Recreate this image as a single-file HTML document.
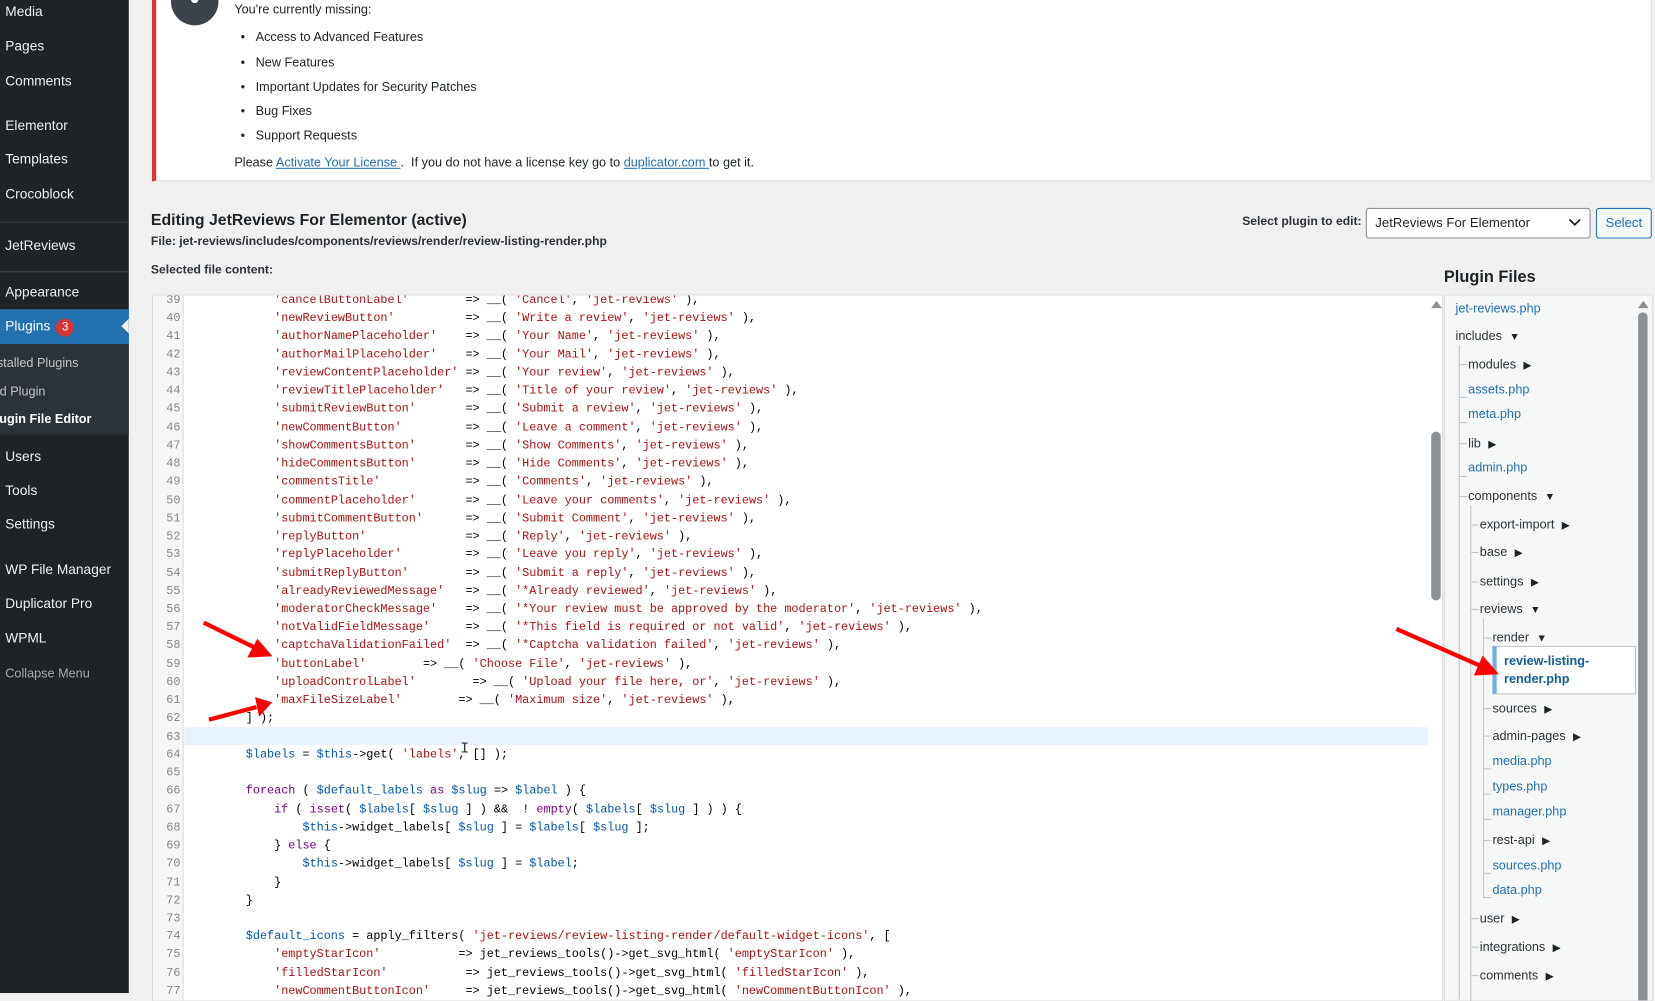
<!DOCTYPE html>
<html><head><meta charset="utf-8">
<style>
*{margin:0;padding:0;box-sizing:border-box}
html,body{width:1655px;height:993px;overflow:hidden;background:#f0f0f1}
#w{position:absolute;left:0;top:0;width:1568px;height:941px;transform:scale(1.05548,1.0553);transform-origin:0 0;font-family:"Liberation Sans",sans-serif;color:#1d2327;font-size:12px}
.a{position:absolute;white-space:nowrap}
#sb{position:absolute;left:0;top:0;width:122px;height:941px;background:#1d2327}
#sb .a{color:#f0f0f1;font-size:13px;line-height:18px;left:5px}
#notice{position:absolute;left:144px;top:-2px;width:1421px;height:174px;background:#fff;border:1px solid #dcdcde;border-left:4px solid #d63638}
#ed{position:absolute;left:144px;top:279px;width:1223px;height:670px;background:#fff;border:1px solid #dcdcde;overflow:hidden}
#gut{position:absolute;left:0;top:0;width:29px;height:100%;background:#f7f7f7;border-right:1px solid #ddd}
pre{position:absolute;left:0;top:-3px;font-family:"Liberation Mono",monospace;font-size:11.2px;line-height:17.24px;color:#000}
#nums{width:26px;text-align:right;color:#888}
#code{left:61px}
.s{color:#a11}.k{color:#708}.v{color:#05a}
.t{position:absolute;white-space:nowrap;font-size:12px;line-height:16px}
.l{color:#2271b1}
.f{color:#2c3338}
.tri{font-size:10px;margin-left:7px;color:#1d2327}
.vl{position:absolute;width:1px;background:#c3c4c7}
.hl{position:absolute;height:1px;width:7px;background:#c3c4c7}
</style></head><body><div id="w">

<div id="sb">
<div class="a" style="top:2px">Media</div>
<div class="a" style="top:35px">Pages</div>
<div class="a" style="top:68px">Comments</div>
<div class="a" style="top:110px">Elementor</div>
<div class="a" style="top:142px">Templates</div>
<div class="a" style="top:175px">Crocoblock</div>
<div style="position:absolute;left:0;top:210px;width:122px;height:1px;background:#3c434a"></div>
<div class="a" style="top:224px">JetReviews</div>
<div style="position:absolute;left:0;top:257px;width:122px;height:1px;background:#3c434a"></div>
<div class="a" style="top:268px">Appearance</div>
<div style="position:absolute;left:0;top:293px;width:122px;height:33px;background:#2271b1"></div>
<div style="position:absolute;left:115px;top:302px;width:0;height:0;border-top:7px solid transparent;border-bottom:7px solid transparent;border-right:7px solid #f0f0f1"></div>
<div class="a" style="top:300px;color:#fff">Plugins <span style="display:inline-block;background:#d63638;color:#fff;border-radius:9px;width:17px;height:17px;font-size:11px;line-height:17px;text-align:center;margin-left:2px">3</span></div>
<div style="position:absolute;left:0;top:326px;width:122px;height:86px;background:#2c3338"></div>
<div class="a" style="top:335px;left:-13px;font-size:12px;color:#c3c4c7">Installed Plugins</div>
<div class="a" style="top:362px;left:-15px;font-size:12px;color:#c3c4c7">Add Plugin</div>
<div class="a" style="top:388px;left:-12px;font-size:12px;color:#fff;font-weight:bold">Plugin File Editor</div>
<div class="a" style="top:424px">Users</div>
<div class="a" style="top:456px">Tools</div>
<div class="a" style="top:488px">Settings</div>
<div class="a" style="top:531px">WP File Manager</div>
<div class="a" style="top:563px">Duplicator Pro</div>
<div class="a" style="top:596px">WPML</div>
<div class="a" style="top:629px;color:#a7aaad;font-size:12px">Collapse Menu</div>
</div>

<div id="notice"></div>
<div style="position:absolute;left:162px;top:-21px;width:45px;height:45px;border-radius:50%;background:#3c434a"></div>
<div style="position:absolute;left:181px;top:-4px;width:7px;height:7px;border-radius:50%;background:#fff"></div>
<div class="a" style="left:222px;top:2px">You're currently missing:</div>
<div class="a" style="left:228px;top:28px">•&nbsp;&nbsp;&nbsp;Access to Advanced Features</div>
<div class="a" style="left:228px;top:52px">•&nbsp;&nbsp;&nbsp;New Features</div>
<div class="a" style="left:228px;top:75px">•&nbsp;&nbsp;&nbsp;Important Updates for Security Patches</div>
<div class="a" style="left:228px;top:98px">•&nbsp;&nbsp;&nbsp;Bug Fixes</div>
<div class="a" style="left:228px;top:121px">•&nbsp;&nbsp;&nbsp;Support Requests</div>
<div class="a" style="left:222px;top:147px">Please <span class="l" style="text-decoration:underline">Activate Your License </span>.&nbsp; If you do not have a license key go to <span class="l" style="text-decoration:underline">duplicator.com </span>to get it.</div>

<div class="a" style="left:143px;top:200px;font-size:15px;font-weight:bold;color:#1d2327">Editing JetReviews For Elementor (active)</div>
<div class="a" style="left:143px;top:223px;font-size:11.5px;font-weight:bold;color:#2c3338">File: jet-reviews/includes/components/reviews/render/review-listing-render.php</div>
<div class="a" style="left:143px;top:250px;font-size:11.5px;font-weight:bold;color:#2c3338">Selected file content:</div>

<div class="a" style="right:278px;top:204px;font-size:11.5px;font-weight:bold;color:#2c3338">Select plugin to edit:</div>
<div style="position:absolute;left:1294px;top:197px;width:213px;height:29px;background:#fff;border:1px solid #8c8f94;border-radius:3px"></div>
<div class="a" style="left:1303px;top:204px;font-size:12.5px">JetReviews For Elementor</div>
<svg class="a" style="left:1486px;top:206px" width="12" height="10"><path d="M1 2 L6 7 L11 2" stroke="#1d2327" stroke-width="1.6" fill="none"/></svg>
<div style="position:absolute;left:1512px;top:197px;width:53px;height:29px;background:#f6f7f7;border:1px solid #2271b1;border-radius:3px;color:#2271b1;text-align:center;line-height:27px;font-size:12.5px">Select</div>

<div id="ed">
<div id="gut"></div>
<div style="position:absolute;left:30px;top:409px;width:1178px;height:17px;background:#e8f2fe"></div>
<pre id="nums">39
40
41
42
43
44
45
46
47
48
49
50
51
52
53
54
55
56
57
58
59
60
61
62
63
64
65
66
67
68
69
70
71
72
73
74
75
76
77</pre>
<pre id="code">        <span class="s">'cancelButtonLabel'</span>        =&gt; __( <span class="s">'Cancel'</span>, <span class="s">'jet-reviews'</span> ),
        <span class="s">'newReviewButton'</span>          =&gt; __( <span class="s">'Write a review'</span>, <span class="s">'jet-reviews'</span> ),
        <span class="s">'authorNamePlaceholder'</span>    =&gt; __( <span class="s">'Your Name'</span>, <span class="s">'jet-reviews'</span> ),
        <span class="s">'authorMailPlaceholder'</span>    =&gt; __( <span class="s">'Your Mail'</span>, <span class="s">'jet-reviews'</span> ),
        <span class="s">'reviewContentPlaceholder'</span> =&gt; __( <span class="s">'Your review'</span>, <span class="s">'jet-reviews'</span> ),
        <span class="s">'reviewTitlePlaceholder'</span>   =&gt; __( <span class="s">'Title of your review'</span>, <span class="s">'jet-reviews'</span> ),
        <span class="s">'submitReviewButton'</span>       =&gt; __( <span class="s">'Submit a review'</span>, <span class="s">'jet-reviews'</span> ),
        <span class="s">'newCommentButton'</span>         =&gt; __( <span class="s">'Leave a comment'</span>, <span class="s">'jet-reviews'</span> ),
        <span class="s">'showCommentsButton'</span>       =&gt; __( <span class="s">'Show Comments'</span>, <span class="s">'jet-reviews'</span> ),
        <span class="s">'hideCommentsButton'</span>       =&gt; __( <span class="s">'Hide Comments'</span>, <span class="s">'jet-reviews'</span> ),
        <span class="s">'commentsTitle'</span>            =&gt; __( <span class="s">'Comments'</span>, <span class="s">'jet-reviews'</span> ),
        <span class="s">'commentPlaceholder'</span>       =&gt; __( <span class="s">'Leave your comments'</span>, <span class="s">'jet-reviews'</span> ),
        <span class="s">'submitCommentButton'</span>      =&gt; __( <span class="s">'Submit Comment'</span>, <span class="s">'jet-reviews'</span> ),
        <span class="s">'replyButton'</span>              =&gt; __( <span class="s">'Reply'</span>, <span class="s">'jet-reviews'</span> ),
        <span class="s">'replyPlaceholder'</span>         =&gt; __( <span class="s">'Leave you reply'</span>, <span class="s">'jet-reviews'</span> ),
        <span class="s">'submitReplyButton'</span>        =&gt; __( <span class="s">'Submit a reply'</span>, <span class="s">'jet-reviews'</span> ),
        <span class="s">'alreadyReviewedMessage'</span>   =&gt; __( <span class="s">'*Already reviewed'</span>, <span class="s">'jet-reviews'</span> ),
        <span class="s">'moderatorCheckMessage'</span>    =&gt; __( <span class="s">'*Your review must be approved by the moderator'</span>, <span class="s">'jet-reviews'</span> ),
        <span class="s">'notValidFieldMessage'</span>     =&gt; __( <span class="s">'*This field is required or not valid'</span>, <span class="s">'jet-reviews'</span> ),
        <span class="s">'captchaValidationFailed'</span>  =&gt; __( <span class="s">'*Captcha validation failed'</span>, <span class="s">'jet-reviews'</span> ),
        <span class="s">'buttonLabel'</span>        =&gt; __( <span class="s">'Choose File'</span>, <span class="s">'jet-reviews'</span> ),
        <span class="s">'uploadControlLabel'</span>        =&gt; __( <span class="s">'Upload your file here, or'</span>, <span class="s">'jet-reviews'</span> ),
        <span class="s">'maxFileSizeLabel'</span>        =&gt; __( <span class="s">'Maximum size'</span>, <span class="s">'jet-reviews'</span> ),
    ] );

    <span class="v">$labels</span> = <span class="v">$this</span>-&gt;get( <span class="s">'labels'</span>, [] );

    <span class="k">foreach</span> ( <span class="v">$default_labels</span> <span class="k">as</span> <span class="v">$slug</span> =&gt; <span class="v">$label</span> ) {
        <span class="k">if</span> ( <span class="k">isset</span>( <span class="v">$labels</span>[ <span class="v">$slug</span> ] ) &amp;&amp;  ! <span class="k">empty</span>( <span class="v">$labels</span>[ <span class="v">$slug</span> ] ) ) {
            <span class="v">$this</span>-&gt;widget_labels[ <span class="v">$slug</span> ] = <span class="v">$labels</span>[ <span class="v">$slug</span> ];
        } <span class="k">else</span> {
            <span class="v">$this</span>-&gt;widget_labels[ <span class="v">$slug</span> ] = <span class="v">$label</span>;
        }
    }

    <span class="v">$default_icons</span> = apply_filters( <span class="s">'jet-reviews/review-listing-render/default-widget-icons'</span>, [
        <span class="s">'emptyStarIcon'</span>           =&gt; jet_reviews_tools()-&gt;get_svg_html( <span class="s">'emptyStarIcon'</span> ),
        <span class="s">'filledStarIcon'</span>           =&gt; jet_reviews_tools()-&gt;get_svg_html( <span class="s">'filledStarIcon'</span> ),
        <span class="s">'newCommentButtonIcon'</span>     =&gt; jet_reviews_tools()-&gt;get_svg_html( <span class="s">'newCommentButtonIcon'</span> ),</pre>
<svg class="a" style="left:1210px;top:3px" width="12" height="10"><path d="M1 9 L6 2 L11 9Z" fill="#8c8f94"/></svg>
<div style="position:absolute;left:1211px;top:129px;width:9px;height:160px;border-radius:5px;background:#8c8f94"></div>
</div>
<div class="a" style="left:436px;top:702px;font-family:'Liberation Mono',monospace;font-size:14px;color:#333">I</div>

<div class="a" style="left:1368px;top:254px;font-size:15.5px;font-weight:bold">Plugin Files</div>
<div style="position:absolute;left:1368px;top:279px;width:198px;height:670px;background:#f6f7f7;border:1px solid #dcdcde;overflow:hidden">
<svg class="a" style="left:182px;top:3px" width="12" height="10"><path d="M1 9 L6 2 L11 9Z" fill="#8c8f94"/></svg>
<div style="position:absolute;left:183px;top:16px;width:9px;height:670px;border-radius:5px;background:#8c8f94"></div>
</div>
<div class="vl" style="left:1382px;top:327px;height:620px"></div>
<div class="vl" style="left:1393px;top:479px;height:470px"></div>
<div class="vl" style="left:1405px;top:586px;height:265px"></div>
<div class="hl" style="left:1383px;top:345px"></div><div class="hl" style="left:1383px;top:376px"></div><div class="hl" style="left:1383px;top:400px"></div><div class="hl" style="left:1383px;top:420px"></div><div class="hl" style="left:1383px;top:451px"></div><div class="hl" style="left:1383px;top:470px"></div>
<div class="hl" style="left:1394px;top:497px"></div><div class="hl" style="left:1394px;top:523px"></div><div class="hl" style="left:1394px;top:551px"></div><div class="hl" style="left:1394px;top:577px"></div><div class="hl" style="left:1394px;top:870px"></div><div class="hl" style="left:1394px;top:897px"></div><div class="hl" style="left:1394px;top:924px"></div>
<div class="hl" style="left:1406px;top:604px"></div><div class="hl" style="left:1406px;top:671px"></div><div class="hl" style="left:1406px;top:697px"></div><div class="hl" style="left:1406px;top:728px"></div><div class="hl" style="left:1406px;top:752px"></div><div class="hl" style="left:1406px;top:776px"></div><div class="hl" style="left:1406px;top:796px"></div><div class="hl" style="left:1406px;top:827px"></div><div class="hl" style="left:1406px;top:850px"></div>
<div class="t l" style="left:1379px;top:284px">jet-reviews.php</div>
<div class="t f" style="left:1379px;top:310px">includes<span class="tri">▼</span></div>
<div class="t f" style="left:1391px;top:337px">modules<span class="tri">▶</span></div>
<div class="t l" style="left:1391px;top:361px">assets.php</div>
<div class="t l" style="left:1391px;top:384px">meta.php</div>
<div class="t f" style="left:1391px;top:412px">lib<span class="tri">▶</span></div>
<div class="t l" style="left:1391px;top:435px">admin.php</div>
<div class="t f" style="left:1391px;top:462px">components<span class="tri">▼</span></div>
<div class="t f" style="left:1402px;top:489px">export-import<span class="tri">▶</span></div>
<div class="t f" style="left:1402px;top:515px">base<span class="tri">▶</span></div>
<div class="t f" style="left:1402px;top:543px">settings<span class="tri">▶</span></div>
<div class="t f" style="left:1402px;top:569px">reviews<span class="tri">▼</span></div>
<div class="t f" style="left:1414px;top:596px">render<span class="tri">▼</span></div>
<div style="position:absolute;left:1414px;top:612px;width:136px;height:46px;background:#fff;border:1px solid #c3c4c7;border-left:4px solid #72aee6"></div>
<div class="t" style="left:1425px;top:618px;color:#135e96;font-weight:bold;line-height:17px">review-listing-<br>render.php</div>
<div class="t f" style="left:1414px;top:663px">sources<span class="tri">▶</span></div>
<div class="t f" style="left:1414px;top:689px">admin-pages<span class="tri">▶</span></div>
<div class="t l" style="left:1414px;top:713px">media.php</div>
<div class="t l" style="left:1414px;top:737px">types.php</div>
<div class="t l" style="left:1414px;top:761px">manager.php</div>
<div class="t f" style="left:1414px;top:788px">rest-api<span class="tri">▶</span></div>
<div class="t l" style="left:1414px;top:812px">sources.php</div>
<div class="t l" style="left:1414px;top:835px">data.php</div>
<div class="t f" style="left:1402px;top:862px">user<span class="tri">▶</span></div>
<div class="t f" style="left:1402px;top:889px">integrations<span class="tri">▶</span></div>
<div class="t f" style="left:1402px;top:916px">comments<span class="tri">▶</span></div>

<svg style="position:absolute;left:0;top:0" width="1568" height="941">
<g fill="#f00" stroke="#f00">
<line x1="193" y1="590" x2="244" y2="615" stroke-width="4"/>
<path d="M256 621 L236 622 L244 607Z" stroke-width="2"/>
<line x1="198" y1="682" x2="243" y2="670" stroke-width="4"/>
<path d="M256 666 L243 662 L246 677Z" stroke-width="2"/>
<line x1="1323" y1="596" x2="1405" y2="632" stroke-width="4"/>
<path d="M1418 638 L1398 639 L1405 623Z" stroke-width="2"/>
</g>
</svg>
</div></body></html>
